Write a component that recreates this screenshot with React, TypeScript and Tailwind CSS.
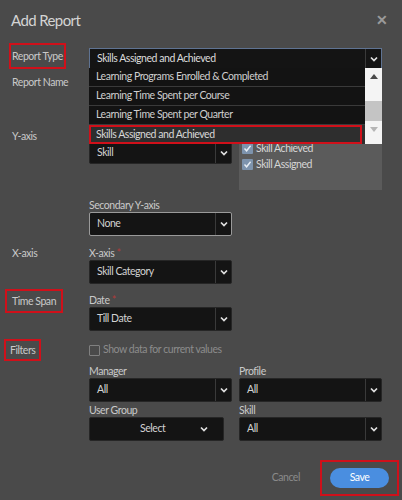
import React from 'react';

const font = { fontFamily: 'Lato, "Open Sans", sans-serif' };

function Chevron({ className = '' }: { className?: string }) {
  return (
    <svg width="8" height="6" viewBox="0 0 8 6" className={className}>
      <polyline points="1,1.5 4,4.5 7,1.5" fill="none" stroke="#e0e0e0" strokeWidth="1.7" />
    </svg>
  );
}

function Select({ value, light = false, h = 'h-[24px]' }: { value: string; light?: boolean; h?: string }) {
  return (
    <div
      className={`flex ${h} items-stretch rounded-[2px] bg-[#141414] border ${
        light ? 'border-[#9a9a9a]' : 'border-[#262626]'
      }`}
    >
      <div className="flex flex-1 items-center pl-[7px] text-[10.5px] text-[#d2d2d2]">{value}</div>
      <div className="flex w-[16px] items-center justify-center border-l border-[#3a3a3a]">
        <Chevron />
      </div>
    </div>
  );
}

function Check({ label }: { label: string }) {
  return (
    <div className="flex items-center gap-[3px] text-[10.5px] leading-[12px] text-[#d6d6d6]">
      <span className="flex h-[11px] w-[11px] items-center justify-center rounded-[1px] bg-[#7d93ad]">
        <svg width="9" height="9" viewBox="0 0 9 9">
          <polyline points="1.5,4.5 3.6,6.8 7.6,1.8" fill="none" stroke="#e8eef5" strokeWidth="1.4" />
        </svg>
      </span>
      {label}
    </div>
  );
}

const listItems = [
  'Learning Programs Enrolled & Completed',
  'Learning Time Spent per Course',
  'Learning Time Spent per Quarter',
];

export default function App() {
  return (
    <div
      className="h-[500px] w-[402px] overflow-hidden bg-[#4a4a4a] pl-[12px] pr-[20px] tracking-[-0.45px] text-[#c9c9c9]"
      style={font}
    >
      <div className="flex h-[43px] items-start justify-between pt-[10px]">
        <h1 className="-ml-[1px] text-[15px] leading-[20px] tracking-[-0.6px] text-[#d4d4d4]">Add Report</h1>
        <span className="mr-[-6px] text-[14px] font-bold leading-[20px] text-[#9a9a9a]">✕</span>
      </div>

      {/* Report Type */}
      <div className="grid grid-cols-[77px_1fr] items-end">
        <div>
          <span className="-ml-[3px] block w-fit border-2 border-[#d0101a] px-[1px] py-[4px] text-[10.5px] leading-[14px]">
            Report Type
          </span>
        </div>
        <div className="relative">
          <div className="flex h-[21px] items-stretch border border-[#5f7392] bg-[#141414]">
            <div className="flex flex-1 items-center pl-[7px] text-[10.5px] text-[#dcdcdc]">Skills Assigned and Achieved</div>
            <div className="flex w-[16px] items-center justify-center border-l border-[#3a3a3a]">
              <Chevron />
            </div>
          </div>
          <div className="absolute left-0 right-0 top-[20px] z-10 flex">
            <div className="flex-1 bg-[#131313]">
              {listItems.map((t) => (
                <div key={t} className="flex h-[19px] items-center border-b border-[#3a3a3a] pl-[7px] text-[10.5px] text-[#cfcfcf]">
                  {t}
                </div>
              ))}
              <div className="h-[19px] bg-[#2e2e2e] pr-[3px]">
                <div className="flex h-[19px] items-center border-2 border-[#d0101a] pl-[5px] text-[10.5px] text-[#d8d8d8]">
                  Skills Assigned and Achieved
                </div>
              </div>
            </div>
            <div className="flex w-[17px] flex-col items-center bg-[#f4f4f4]">
              <svg width="8" height="5" viewBox="0 0 8 5" className="mt-[6px]">
                <polygon points="0,5 4,0 8,5" fill="#4a4a4a" />
              </svg>
              <div className="mt-[22px] h-[20px] w-full bg-[#c4c4c4]" />
              <svg width="8" height="5" viewBox="0 0 8 5" className="mt-[6px]">
                <polygon points="0,0 4,5 8,0" fill="#b5b5b5" />
              </svg>
            </div>
          </div>
        </div>
      </div>

      {/* Report Name */}
      <div className="grid h-[57px] grid-cols-[77px_1fr]">
        <div className="pt-[6px] text-[10.5px] leading-[14px]">Report Name</div>
        <div className="pt-[6px]">
          <Select value="" />
        </div>
      </div>

      {/* Y-axis */}
      <div className="grid grid-cols-[77px_1fr]">
        <div className="pt-[3px] text-[10.5px] leading-[14px]">Y-axis</div>
        <div className="grid grid-cols-2 gap-[7px]">
          <div>
            <div className="h-[16px]" />
            <Select value="Skill" h="h-[22px]" />
          </div>
          <div className="flex h-[64px] flex-col gap-[4px] bg-[#5b5b5b] pl-[3px] pt-[16px]">
            <Check label="Skill Achieved" />
            <Check label="Skill Assigned" />
          </div>
        </div>
      </div>

      {/* Secondary Y-axis */}
      <div className="mt-[8px] grid grid-cols-[77px_1fr]">
        <div />
        <div className="grid grid-cols-2 gap-[7px]">
          <div>
            <div className="text-[10.5px] leading-[14px]">Secondary Y-axis</div>
            <Select value="None" light />
          </div>
        </div>
      </div>

      {/* X-axis */}
      <div className="mt-[10px] grid grid-cols-[77px_1fr]">
        <div className="text-[10.5px] leading-[14px]">X-axis</div>
        <div className="grid grid-cols-2 gap-[7px]">
          <div>
            <div className="text-[10.5px] leading-[14px]">
              X-axis <span className="text-[#b03a3a]">*</span>
            </div>
            <Select value="Skill Category" />
          </div>
        </div>
      </div>

      {/* Time Span */}
      <div className="mt-[9px] grid grid-cols-[77px_1fr]">
        <div>
          <span className="-ml-[7px] -mt-[4px] block w-fit border-2 border-[#d0101a] px-[5px] py-[3px] text-[10.5px] leading-[14px]">
            Time Span
          </span>
        </div>
        <div className="grid grid-cols-2 gap-[7px]">
          <div>
            <div className="text-[10.5px] leading-[14px]">
              Date <span className="text-[#b03a3a]">*</span>
            </div>
            <Select value="Till Date" />
          </div>
        </div>
      </div>

      {/* Filters */}
      <div className="mt-[8px] grid grid-cols-[77px_1fr] items-center">
        <div>
          <span className="-ml-[8px] block w-fit border-2 border-[#d0101a] px-[4px] py-[2px] text-[10.5px] leading-[14px]">
            Filters
          </span>
        </div>
        <div className="flex items-center gap-[3px] text-[10.5px] text-[#8c8c8c]">
          <span className="h-[11px] w-[11px] rounded-[1px] border border-[#808080]" />
          Show data for current values
        </div>
      </div>

      {/* Manager / Profile */}
      <div className="mt-[3px] grid grid-cols-[77px_1fr]">
        <div />
        <div className="grid grid-cols-2 gap-[7px]">
          <div>
            <div className="text-[10.5px] leading-[14px]">Manager</div>
            <Select value="All" />
          </div>
          <div>
            <div className="text-[10.5px] leading-[14px]">Profile</div>
            <Select value="All" />
          </div>
        </div>
      </div>

      {/* User Group / Skill */}
      <div className="mt-[1px] grid grid-cols-[77px_1fr]">
        <div />
        <div className="grid grid-cols-2 gap-[7px]">
          <div>
            <div className="text-[10.5px] leading-[14px]">User Group</div>
            <div className="mr-[8px] flex h-[24px] items-center rounded-[2px] border border-[#262626] bg-[#141414] pl-[50px] text-[10.5px] text-[#d2d2d2]">
              <span>Select</span>
              <Chevron className="ml-[35px]" />
            </div>
          </div>
          <div>
            <div className="text-[10.5px] leading-[14px]">Skill</div>
            <Select value="All" />
          </div>
        </div>
      </div>

      {/* Footer */}
      <div className="-mr-[17px] mt-[19px] flex items-center justify-end gap-[20px]">
        <span className="text-[10.5px] text-[#8a8a8a]">Cancel</span>
        <div className="border-2 border-[#d0101a] px-[8px] py-[6px]">
          <div className="flex h-[20px] w-[59px] items-center justify-center rounded-full bg-[#4a8ee0] text-[10.5px] text-white">
            Save
          </div>
        </div>
      </div>
    </div>
  );
}
